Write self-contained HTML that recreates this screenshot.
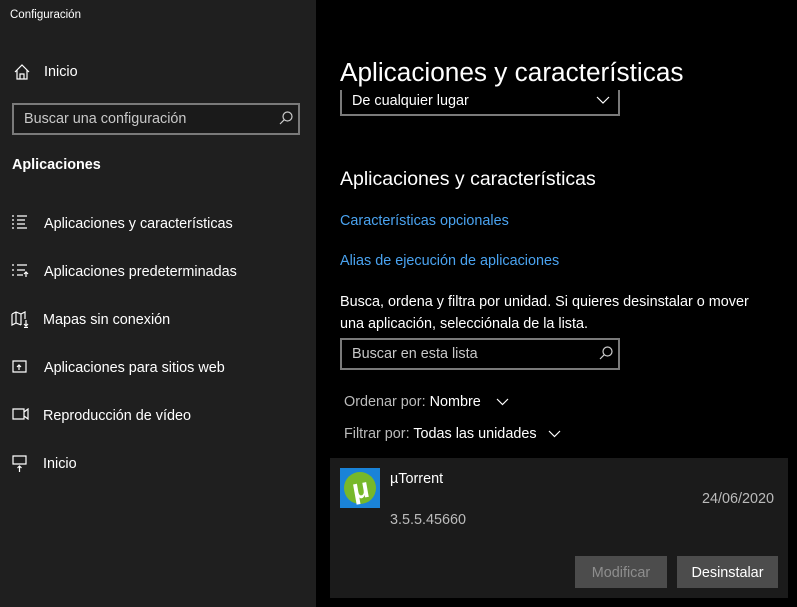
<!DOCTYPE html>
<html><head><meta charset="utf-8"><style>
body{margin:0;width:797px;height:607px;background:#000;font-family:"Segoe UI","Liberation Sans",sans-serif;color:#fff;overflow:hidden;position:relative;font-size:14.4px}
.a{position:absolute;white-space:nowrap}
#side{position:absolute;left:0;top:0;width:316px;height:607px;background:#1f1f1f}
.nav{font-size:14.4px;color:#fff}
svg{position:absolute}
.box{position:absolute;border:2px solid #7a7a7a;box-sizing:border-box}
</style></head><body>
<div id="side">
<div class="a" style="left:10px;top:9px;font-size:11.5px">Configuración</div>
<svg style="left:13px;top:63px" width="18" height="18" viewBox="0 0 18 18" fill="none" stroke="#fff" stroke-width="1.2"><path d="M2 9 L9 2 L16 9 M4 7 V16 H14 V7 M7 16 V11 H11 V16"/></svg>
<div class="a nav" style="left:44px;top:64px">Inicio</div>
<div class="box" style="left:12px;top:103px;width:288px;height:32px;background:#1a1a1a"></div>
<div class="a" style="left:24px;top:111px;color:#c8c8c8">Buscar una configuración</div>
<svg style="left:278px;top:110px" width="16" height="16" viewBox="0 0 16 16" fill="none" stroke="#ccc" stroke-width="1.2"><circle cx="9.5" cy="6.5" r="4.5"/><path d="M6.3 9.7 L2 14"/></svg>
<div class="a" style="left:12px;top:157px;font-weight:bold">Aplicaciones</div>
<svg style="left:11px;top:214px" width="18" height="16" viewBox="0 0 18 16" fill="none" stroke="#fff" stroke-width="1.2"><path d="M1 2h2M1 6h2M1 10h2M1 14h2M6 2h10M6 6h8M6 10h8M6 14h10"/></svg>
<div class="a nav" style="left:44px;top:216px">Aplicaciones y características</div>
<svg style="left:11px;top:263px" width="18" height="16" viewBox="0 0 18 16" fill="none" stroke="#fff" stroke-width="1.2"><path d="M1 2h2M1 7h2M1 12h2M6 2h10M6 7h8M6 12h6M15 14V9M13 11l2-2 2 2"/></svg>
<div class="a nav" style="left:44px;top:264px">Aplicaciones predeterminadas</div>
<svg style="left:11px;top:311px" width="19" height="17" viewBox="0 0 19 17" fill="none" stroke="#fff" stroke-width="1.2"><path d="M1 3 L5 1 L10 3 L14 1 V8 M1 3 V14 L5 12 L10 14 M5 1V12M10 3V14M15 9V15M13 13l2 2 2-2M13 16.5h4"/></svg>
<div class="a nav" style="left:43px;top:312px">Mapas sin conexión</div>
<svg style="left:12px;top:360px" width="16" height="14" viewBox="0 0 16 14" fill="none" stroke="#fff" stroke-width="1.2"><path d="M1 1H14V12H1Z M7 10V5M5 7l2-2 2 2"/></svg>
<div class="a nav" style="left:44px;top:360px">Aplicaciones para sitios web</div>
<svg style="left:12px;top:408px" width="18" height="12" viewBox="0 0 18 12" fill="none" stroke="#fff" stroke-width="1.2"><path d="M1 1H12V11H1Z M12 4L16 1V11L12 8"/></svg>
<div class="a nav" style="left:43px;top:408px">Reproducción de vídeo</div>
<svg style="left:12px;top:455px" width="16" height="18" viewBox="0 0 16 18" fill="none" stroke="#fff" stroke-width="1.2"><path d="M1 1H14V9H1Z M7.5 17V11M5.5 13l2-2 2 2"/></svg>
<div class="a nav" style="left:43px;top:456px">Inicio</div>
</div>
<div class="box" style="left:340px;top:84px;width:280px;height:32px;border-top:none"></div>
<div class="a" style="left:352px;top:93px">De cualquier lugar</div>
<svg style="left:596px;top:96px" width="14" height="9" viewBox="0 0 14 9" fill="none" stroke="#fff" stroke-width="1.2"><path d="M1 1l6 6 6-6"/></svg>
<div class="a" style="left:316px;top:40px;width:481px;height:50px;background:#000"></div>
<div class="a" style="left:340px;top:57px;font-size:26.2px">Aplicaciones y características</div>
<div class="a" style="left:340px;top:168px;font-size:19.5px">Aplicaciones y características</div>
<div class="a" style="left:340px;top:213px;color:#4aa3f0">Características opcionales</div>
<div class="a" style="left:340px;top:253px;color:#4aa3f0">Alias de ejecución de aplicaciones</div>
<div class="a" style="left:340px;top:291px;line-height:22px">Busca, ordena y filtra por unidad. Si quieres desinstalar o mover<br>una aplicación, selecciónala de la lista.</div>
<div class="box" style="left:340px;top:338px;width:280px;height:32px"></div>
<div class="a" style="left:352px;top:346px;color:#c8c8c8">Buscar en esta lista</div>
<svg style="left:598px;top:345px" width="16" height="16" viewBox="0 0 16 16" fill="none" stroke="#ccc" stroke-width="1.2"><circle cx="9.5" cy="6.5" r="4.5"/><path d="M6.3 9.7 L2 14"/></svg>
<div class="a" style="left:344px;top:394px"><span style="color:#bbb">Ordenar por:</span> Nombre</div>
<svg style="left:496px;top:398px" width="13" height="8" viewBox="0 0 13 8" fill="none" stroke="#fff" stroke-width="1.2"><path d="M1 1l5.5 5.5L12 1"/></svg>
<div class="a" style="left:344px;top:426px"><span style="color:#bbb">Filtrar por:</span> Todas las unidades</div>
<svg style="left:548px;top:430px" width="13" height="8" viewBox="0 0 13 8" fill="none" stroke="#fff" stroke-width="1.2"><path d="M1 1l5.5 5.5L12 1"/></svg>
<div class="a" style="left:330px;top:458px;width:458px;height:140px;background:#1b1b1b"></div>
<div class="a" style="left:340px;top:468px;width:40px;height:40px;background:#1a83d8"></div>
<div class="a" style="left:344px;top:472px;width:32px;height:32px;border-radius:50%;background:#77b82a"></div>
<div class="a" style="left:352px;top:473px;font-size:28px;font-weight:bold;color:#fff;transform:rotate(-10deg)">μ</div>
<div class="a" style="left:390px;top:471px">µTorrent</div>
<div class="a" style="left:702px;top:491px;color:#bbb">24/06/2020</div>
<div class="a" style="left:390px;top:512px;color:#bbb">3.5.5.45660</div>
<div class="a" style="left:575px;top:556px;width:92px;height:32px;background:#4c4c4c;color:#8e8e8e;text-align:center;line-height:34px">Modificar</div>
<div class="a" style="left:677px;top:556px;width:101px;height:32px;background:#4c4c4c;color:#fff;text-align:center;line-height:34px">Desinstalar</div>
</body></html>
